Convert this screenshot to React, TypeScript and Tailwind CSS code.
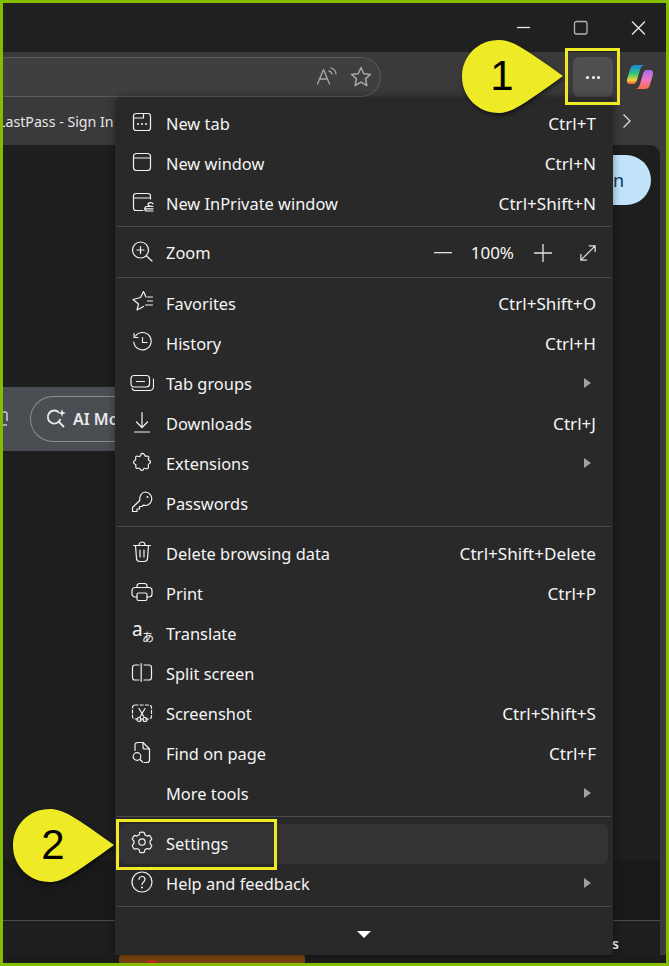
const Ico = ({ children }: { children: React.ReactNode }) => (
  <svg width="24" height="24" viewBox="0 0 24 24" fill="none" stroke="#f2f2f2" strokeWidth="1.2" strokeLinecap="round" strokeLinejoin="round" className="shrink-0">
    {children}
  </svg>
);

const icons: Record<string, React.ReactNode> = {
  newTab: (
    <Ico>
      <rect x="3.5" y="3.5" width="17" height="17" rx="2.5" />
      <path d="M3.5 8h10V3.500" />
      <path d="M8 14h.01M12 14h.01M16 14h.01" strokeWidth="2" />
    </Ico>
  ),
  newWindow: (
    <Ico>
      <rect x="3.5" y="3.5" width="17" height="17" rx="3" />
      <path d="M3.5 8h17" />
    </Ico>
  ),
  inPrivate: (
    <Ico>
      <path d="M13 20.500H6a2.500 2.500 0 0 1-2.500-2.500V6a2.500 2.500 0 0 1 2.500-2.500h12A2.500 2.500 0 0 1 20.500 6v3" />
      <path d="M3.500 8h17" />
      <path d="M23 14c-.5-2-5-2-5 .5 0 2 3 1.500 5 2h-6c-3 0-3 4.500 0 4.500h6M15.500 18.800H23" />
    </Ico>
  ),
  zoom: (
    <Ico>
      <circle cx="10.500" cy="11" r="8" />
      <path d="M16.500 17L22 22M10.500 7.500v7M7 11h7" />
    </Ico>
  ),
  favorites: (
    <Ico>
      <path d="M16 7l-2.500-5.500-3 6-7.500 2 5.500 4.500-1.500 6 6.500-3.500" />
      <path d="M17.500 7h5M17.500 11h5M15.500 15h7" />
    </Ico>
  ),
  history: (
    <Ico>
      <path d="M5.500 6A8.700 8.700 0 1 1 3.800 12" />
      <path d="M4 3.500v4h4M12.500 7.500v5h4.500" />
    </Ico>
  ),
  tabGroups: (
    <Ico>
      <rect x="1" y="5.500" width="18.500" height="11.500" rx="3" />
      <path d="M6.500 11.500h8" />
      <path d="M23.500 9v7.500a4 4 0 0 1-4 4H5a3 3 0 0 1-3-2" />
    </Ico>
  ),
  downloads: (
    <Ico>
      <path d="M12 2.500v15M6.500 12L12 17.500l5.500-5.500M4.500 22h15" />
    </Ico>
  ),
  extensions: (
    <Ico>
      <path
        transform="translate(12 11.500) scale(.85) translate(-12 -12)"
        strokeWidth="1.400"
        d="M10.500 3.500a2.500 2.500 0 0 1 4 0c1 1 .5 1.500 1 2 1 .5 4-.5 4.500 1s-1 2.500-.5 3.500c.5 1 2.500.5 2.500 2.500s-2 1.500-2.500 3c-.5 1 1 3-.5 4.500s-3-.5-4.500 0c-1 .5-.5 2.500-2.500 2.500s-2-2-3-2.500c-1.500-.5-3 1-4-.5s.5-3-.5-4c-1-.5-2.500-.5-2.500-2.500s2-2 2.500-3c.5-1-.5-3 .5-4s3 .5 4.500 0c1-.5.500-1.500 1.500-2z"
      />
    </Ico>
  ),
  passwords: (
    <Ico>
      <path d="M15.500 2a6.800 6.800 0 0 1 .5 13.500c-1 0-1.800-.1-2.500-.5L12 16.500H9.500V19H7v2.500H2.500v-4l7.200-7C9.300 6.500 11.500 2 15.500 2z" />
      <path d="M17.500 7h.01" strokeWidth="2" />
    </Ico>
  ),
  trash: (
    <Ico>
      <path d="M3.500 5.500h17M9 5.500V5a3 3 0 0 1 6 0v.5M5.500 5.500l1 13a3.300 3.300 0 0 0 3.300 3h4.400a3.300 3.300 0 0 0 3.300-3l1-13M10 10v7M14 10v7" />
    </Ico>
  ),
  print: (
    <Ico>
      <path d="M7 7.500V6a2.500 2.500 0 0 1 2.500-2.500h5A2.500 2.500 0 0 1 17 6v1.500" />
      <path d="M7 17H5a3 3 0 0 1-3-3v-3.500a3 3 0 0 1 3-3h14a3 3 0 0 1 3 3V14a3 3 0 0 1-3 3h-2" />
      <rect x="7" y="13" width="10" height="7.500" rx="1.500" />
    </Ico>
  ),
  translate: (
    <svg width="24" height="24" viewBox="0 0 24 24" className="shrink-0 overflow-visible">
      <text x="2" y="16" fontSize="19" fill="#f2f2f2" fontFamily="'Noto Sans', sans-serif">a</text>
      <text x="12" y="22" fontSize="12" fill="#f2f2f2" fontFamily="'Noto Sans CJK JP', sans-serif">あ</text>
    </svg>
  ),
  split: (
    <Ico>
      <path d="M9 5H5a2.500 2.500 0 0 0-2.500 2.500v10A2.500 2.500 0 0 0 5 20h4M14 5h5a2.500 2.500 0 0 1 2.500 2.500v10A2.500 2.500 0 0 1 19 20h-5M11.200 3.500v18" />
    </Ico>
  ),
  screenshot: (
    <Ico>
      <rect x="2.500" y="5" width="19" height="14" rx="2.500" strokeDasharray="3 2.200" />
      <path d="M9 8.500l5 8.500M15 8.500l-5 8.500" />
      <circle cx="9" cy="19.500" r="2" />
      <circle cx="15" cy="19.500" r="2" />
    </Ico>
  ),
  find: (
    <Ico>
      <path d="M5 10.500V5a2.500 2.500 0 0 1 2.500-2.500H13l6.500 6.500v11a2.500 2.500 0 0 1-2.500 2.500h-3" />
      <path d="M13 2.500V7a2 2 0 0 0 2 2h4.500" />
      <circle cx="7" cy="16.500" r="3.800" />
      <path d="M10 19.500L12.500 22" />
    </Ico>
  ),
  settings: (
    <Ico>
      <path d="M9.800 2.800a10 10 0 0 1 4.400 0l.6 2.500 2.300 1.300 2.500-.7a10 10 0 0 1 2.200 3.800L20.100 11.500v2.600l1.700 1.800a10 10 0 0 1-2.200 3.800l-2.500-.7-2.300 1.300-.6 2.500a10 10 0 0 1-4.400 0l-.6-2.500-2.300-1.300-2.500.7a10 10 0 0 1-2.200-3.800l1.700-1.800v-2.600L2.200 9.700A10 10 0 0 1 4.400 5.900l2.500.7 2.300-1.300z" transform="translate(0 -.5)" />
      <circle cx="12" cy="12" r="3.200" />
    </Ico>
  ),
  help: (
    <Ico>
      <circle cx="12" cy="12" r="10" />
      <path d="M9 9.500c0-4 6-4 6 0 0 2.500-3 2.500-3 5" />
      <path d="M12 17.500h.01" strokeWidth="2" />
    </Ico>
  ),
};

type Item = { icon?: string; label: string; keys?: string; sub?: boolean };

const groups: Item[][] = [
  [
    { icon: 'newTab', label: 'New tab', keys: 'Ctrl+T' },
    { icon: 'newWindow', label: 'New window', keys: 'Ctrl+N' },
    { icon: 'inPrivate', label: 'New InPrivate window', keys: 'Ctrl+Shift+N' },
  ],
  [
    { icon: 'favorites', label: 'Favorites', keys: 'Ctrl+Shift+O' },
    { icon: 'history', label: 'History', keys: 'Ctrl+H' },
    { icon: 'tabGroups', label: 'Tab groups', sub: true },
    { icon: 'downloads', label: 'Downloads', keys: 'Ctrl+J' },
    { icon: 'extensions', label: 'Extensions', sub: true },
    { icon: 'passwords', label: 'Passwords' },
  ],
  [
    { icon: 'trash', label: 'Delete browsing data', keys: 'Ctrl+Shift+Delete' },
    { icon: 'print', label: 'Print', keys: 'Ctrl+P' },
    { icon: 'translate', label: 'Translate' },
    { icon: 'split', label: 'Split screen' },
    { icon: 'screenshot', label: 'Screenshot', keys: 'Ctrl+Shift+S' },
    { icon: 'find', label: 'Find on page', keys: 'Ctrl+F' },
    { label: 'More tools', sub: true },
  ],
];

const Row = ({ item, hover }: { item: Item; hover?: boolean }) => (
  <div className={`flex h-10 items-center rounded-md pl-[11px] pr-[12px] ${hover ? 'bg-[#333333]' : ''}`}>
    <div className="flex w-[36px] -translate-y-[2px] items-center">{item.icon && icons[item.icon]}</div>
    <span>{item.label}</span>
    <span className="ml-auto text-[17.100px]">{item.keys}</span>
    {item.sub && <span className="mr-[5px] h-0 w-0 -translate-y-[1px] border-y-[5px] border-l-[7px] border-y-transparent border-l-[#a0a0a0]" />}
  </div>
);

const Divider = () => <div className="-ml-[2px] -mr-[3px] my-[2px] h-px bg-[#4c4c4c]" />;

const Callout = ({ n, className }: { n: string; className: string }) => (
  <div className={`absolute h-[75px] w-[102px] ${className}`}>
    <svg width="102" height="75" viewBox="0 0 102 75" className="absolute inset-0 drop-shadow-[1px_2px_2px_rgba(0,0,0,0.6)]">
      <path d="M37 1C50 1 62 9 101 37C62 65 50 74 37 74C16 74 0 58 0 37.500C0 17 16 1 37 1Z" fill="#eeea26" />
    </svg>
    <span className="absolute left-0 top-0 flex h-full w-[80px] items-center justify-center pb-[2px] font-['Liberation_Sans',sans-serif] text-[42px] leading-none text-black">{n}</span>
  </div>
);

export default function App() {
  return (
    <div className="relative h-[966px] w-[669px] overflow-hidden border-[3px] border-[#84bd00] bg-[#3a3a3a] font-['Noto_Sans',sans-serif] text-[16.4px] text-[#f5f5f5]">
      {/* title bar */}
      <div className="flex h-[49px] items-start justify-end bg-[#202020] pr-[21px] pt-[17px]">
        <svg width="128" height="16" viewBox="0 0 128 16" fill="none" stroke="#e8e8e8" strokeWidth="1.300">
          <path d="M0 7.500h13" />
          <rect x="57.500" y="1.500" width="12.500" height="12.500" rx="2" stroke="#b5b5b5" />
          <path d="M115 1.500l13 13M128 1.500l-13 13" />
        </svg>
      </div>

      {/* toolbar */}
      <div className="flex h-[45px] items-start bg-[#3a3a3a] pt-[5px]">
        <div className="flex h-[40px] w-[378px] items-center justify-end gap-[12px] rounded-r-[20px] border border-l-0 border-[#5a5a5a] bg-[#3f3f3f] pr-[8px]">
          <svg width="22" height="22" viewBox="0 0 22 22" fill="none" stroke="#a8a8a8" strokeWidth="1.300" strokeLinecap="round" strokeLinejoin="round">
            <path d="M1.500 18L7.500 3.500 13.500 18M3.500 13h8" />
            <path d="M13 5a4 4 0 0 1 3 3M15 2a7 7 0 0 1 5 6" />
          </svg>
          <svg width="22" height="22" viewBox="0 0 22 22" fill="none" stroke="#a8a8a8" strokeWidth="1.500" strokeLinejoin="round">
            <path d="M11 1.500l2.800 6.200 6.700.7-5 4.500 1.400 6.600-5.900-3.400-5.900 3.400 1.400-6.600-5-4.500 6.700-.7z" />
          </svg>
        </div>
        <div className="ml-auto mr-[12px] flex items-center gap-[13px]">
          <div className="flex h-[40px] w-[40px] items-center justify-center gap-[2.500px] rounded-md bg-[#4f4f4f]">
            <i className="h-[3px] w-[3px] rounded-full bg-white" />
            <i className="h-[3px] w-[3px] rounded-full bg-white" />
            <i className="h-[3px] w-[3px] rounded-full bg-white" />
          </div>
          <svg width="28" height="28" viewBox="0 0 28 28">
            <defs>
              <linearGradient id="cpA" x1="0" y1="0" x2="0" y2="1">
                <stop offset="0" stopColor="#1e84e8" />
                <stop offset="0.450" stopColor="#2fc47a" />
                <stop offset="0.800" stopColor="#f3d23a" />
                <stop offset="1" stopColor="#f2603a" />
              </linearGradient>
              <linearGradient id="cpB" x1="0" y1="0" x2="0" y2="1">
                <stop offset="0" stopColor="#a76bea" />
                <stop offset="0.500" stopColor="#ec78c8" />
                <stop offset="1" stopColor="#f8703c" />
              </linearGradient>
            </defs>
            <path d="M9 2h9.500c-2.500.5-3.500 2-4.500 5l-3 10c-.8 2.500-2 4-4 4H4c-2.500 0-3.500-2-3-4.500l3-10C4.800 3.500 6.500 2 9 2z" fill="url(#cpA)" />
            <path d="M19 26H9.500c2.500-.5 3.500-2 4.500-5l3-10c.8-2.500 2-4 4-4h3c2.500 0 3.500 2 3 4.500l-3 10C23.200 24.500 21.500 26 19 26z" fill="url(#cpB)" />
          </svg>
        </div>
      </div>

      {/* favorites bar */}
      <div className="flex h-[48px] items-center justify-between pr-[34px] text-[14.200px] text-[#e6e6e6]">
        <span className="-ml-[5px] pt-[2px]">LastPass - Sign In</span>
        <svg width="10" height="16" viewBox="0 0 10 16" fill="none" stroke="#e0e0e0" strokeWidth="1.300">
          <path d="M1.500 1.500L8 8l-6.500 6.500" />
        </svg>
      </div>

      {/* page behind the menu */}
      <div className="mr-[6px] flex h-[810px] flex-col rounded-tr-[10px] bg-[#1e1e1e]">
        <div className="flex justify-end pr-[9px] pt-[10px]">
          <div className="flex h-[50px] w-[60px] items-center justify-end rounded-r-[25px] bg-[#c2e4fb] pr-[27px] text-[18px] text-[#0b3a66]">n</div>
        </div>
        <div className="mt-[182px] flex h-[64px] w-[112px] items-center bg-[#4a4d52]">
          <svg width="5" height="16" viewBox="0 0 5 16" fill="none" stroke="#c8cacd" strokeWidth="1.600" className="shrink-0">
            <path d="M0 1h2.500a2 2 0 0 1 1.500 2v7M0 14h4" />
          </svg>
          <div className="ml-[22px] flex h-[46px] w-[120px] shrink-0 items-center gap-[6px] rounded-l-[23px] border border-r-0 border-[#8a8d91] pl-[14px] text-[16px] font-semibold whitespace-nowrap text-[#e8eaed]">
            <svg width="22" height="22" viewBox="0 0 22 22" fill="none" stroke="#e8eaed" strokeWidth="1.800" className="shrink-0">
              <path d="M14 4.500A6.500 6.500 0 1 0 15.500 11M13 13l6 6" />
              <path d="M17 1l1 3 3 1-3 1-1 3-1-3-3-1 3-1z" fill="#e8eaed" stroke="none" />
            </svg>
            <span>AI Mo</span>
          </div>
        </div>
        <div className="mt-[409px] h-[60px] bg-[#191919]" />
        <div className="h-px bg-[#4c4c4c]" />
        <div className="flex flex-1 items-end justify-end pb-[1px] pr-[41px] text-[14px] font-semibold">s</div>
      </div>
      <div className="flex h-[8px] bg-[#1c1c1c]">
        <div className="relative ml-[116px] w-[186px] rounded-t-[3px] bg-[#7a4310]">
          <span className="absolute left-[28px] top-[5px] h-[3px] w-[10px] rounded-t-full bg-[#c0281c]" />
        </div>
      </div>

      {/* browser menu */}
      <div className="absolute left-[112px] top-[94px] h-[858px] w-[498px] rounded-tl-[8px] rounded-b-[2px] bg-[#292929] pl-[4px] pr-[5px] pt-[7px] shadow-[0_0_8px_rgba(0,0,0,0.4)]">
        {groups[0].map((i) => <Row key={i.label} item={i} />)}
        <Divider />
        <div className="flex h-[46px] items-center pl-[11px] pr-[12px] pt-[2px]">
          <div className="flex w-[36px] -translate-y-[2px] items-center">{icons.zoom}</div>
          <span>Zoom</span>
          <div className="ml-auto flex items-center">
            <svg width="18" height="2"><rect width="18" height="1.300" fill="#e0e0e0" /></svg>
            <span className="ml-[19px] mr-[20px] text-[17px]">100%</span>
            <svg width="18" height="18" stroke="#e0e0e0" strokeWidth="1.300"><path d="M0 9h18M9 0v18" /></svg>
            <svg width="16" height="16" viewBox="0 0 18 18" fill="none" stroke="#e0e0e0" strokeWidth="1.400" className="ml-[28px]">
              <path d="M1 17L17 1M10 1h7v7M1 10v7h7" />
            </svg>
          </div>
        </div>
        <Divider />
        <div className="h-[4px]" />
        {groups[1].map((i) => <Row key={i.label} item={i} />)}
        <Divider />
        <div className="h-[5px]" />
        {groups[2].map((i) => <Row key={i.label} item={i} />)}
        <Divider />
        <div className="h-[5px]" />
        <Row item={{ icon: 'settings', label: 'Settings' }} hover />
        <Row item={{ icon: 'help', label: 'Help and feedback', sub: true }} />
        <Divider />
        <div className="flex h-[46px] items-center justify-center pt-[4px]">
          <span className="h-0 w-0 border-x-[7px] border-t-[7px] border-x-transparent border-t-white" />
        </div>
      </div>

      {/* annotations */}
      <div className="absolute left-[562px] top-[45px] h-[57px] w-[55px] border-[3px] border-[#eeea26]" />
      <div className="absolute left-[113px] top-[816px] h-[51px] w-[161px] border-[3px] border-[#eeea26]" />
      <Callout n="1" className="left-[459px] top-[36px]" />
      <Callout n="2" className="left-[10px] top-[805px]" />
    </div>
  );
}
